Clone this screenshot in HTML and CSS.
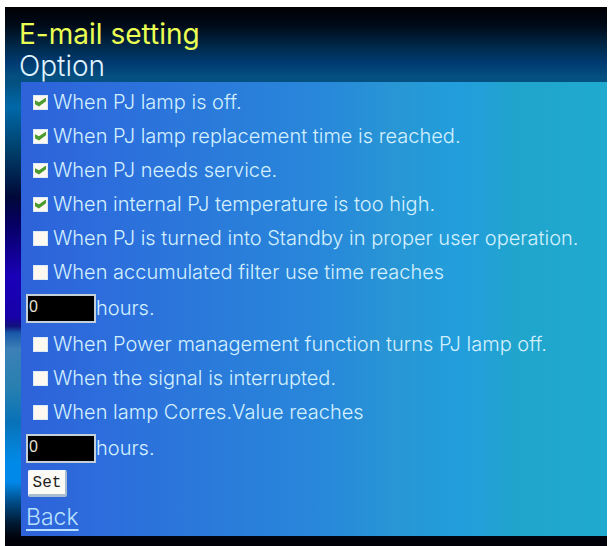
FILE: index.html
```html
<!DOCTYPE html>
<html lang="en">

<head>
    <meta charset="UTF-8">
    <meta name="viewport" content="width=device-width, initial-scale=1.0">
    <title>E-mail setting</title>
    <link rel="stylesheet" href="styles.css">
</head>

<body>
    <div class="page">
        <h1 class="title">E-mail setting</h1>
        <h2 class="subtitle">Option</h2>
        <form class="panel">
            <label class="option"><input type="checkbox" checked>When PJ lamp is off.</label>
            <label class="option"><input type="checkbox" checked>When PJ lamp replacement time is reached.</label>
            <label class="option"><input type="checkbox" checked>When PJ needs service.</label>
            <label class="option"><input type="checkbox" checked>When internal PJ temperature is too high.</label>
            <label class="option"><input type="checkbox">When PJ is turned into Standby in proper user operation.</label>
            <label class="option"><input type="checkbox">When accumulated filter use time reaches</label>
            <div class="hours">
                <input type="text" id="filterHours" value="0">
                <label for="filterHours">hours.</label>
            </div>
            <label class="option"><input type="checkbox">When Power management function turns PJ lamp off.</label>
            <label class="option"><input type="checkbox">When the signal is interrupted.</label>
            <label class="option"><input type="checkbox">When lamp Corres.Value reaches</label>
            <div class="hours">
                <input type="text" id="lampHours" value="0">
                <label for="lampHours">hours.</label>
            </div>
            <button type="button" class="set-btn">Set</button>
            <a class="back" href="#">Back</a>
        </form>
    </div>
</body>

</html>
```

FILE: styles.css
```css
* {
    box-sizing: border-box;
}

body {
    margin: 0;
    padding: 7px 2px 0 5px;
    min-height: 100vh;
    display: flex;
    background-color: #ffffff;
    font-family: Inter, "Liberation Sans", sans-serif;
    font-weight: 300;
    font-size: 20px;
    color: #d4f0ff;
}

.page {
    flex: 1;
    padding: 11px 0 11px 14px;
    /* dark band over the panel, then the coloured strip down the left */
    background:
        linear-gradient(to bottom, #000004 0, #000a18 18px, #002c50 42px, #003b72 56px, #045080 70px, #045080 75px, transparent 75px),
        linear-gradient(to bottom, #045080 75px, #0068a8 100px, #003e68 145px, #000838 190px, #050060 215px, #1a00b8 270px, #1800a8 310px, #12107c 319px, #1858a8 326px, #3c80b8 342px, #2880b0 380px, #0872b8 415px, #008ae8 455px, #0088e8 475px, #004c88 495px, #001830 517px, #000008 532px);
}

.title,
.subtitle {
    margin: 0;
    font-size: 28px;
    font-weight: 400;
    line-height: 32px;
}

.title {
    color: #eaff52;
}

.subtitle {
    font-weight: 300;
    color: #e0f4ff;
}

.panel {
    display: flex;
    flex-direction: column;
    align-items: flex-start;
    margin-left: 2px;
    padding: 3px 0 2px 5px;
    background: linear-gradient(to right, #2e62da 0%, #2c70dc 18%, #2a7cda 35%, #2888da 52%, #2896d4 64%, #229edc 74%, #22a0d8 79%, #20a4cc 84%, #20aad0 100%);
}

.option {
    display: flex;
    align-items: center;
    gap: 5px;
    height: 34px;
    padding-left: 7px;
    white-space: nowrap;
}

.option input {
    appearance: none;
    display: grid;
    place-items: center;
    width: 15px;
    height: 15px;
    margin: 0;
    background-color: #fdf8f0;
    border: 1px solid #dceaf4;
}

.option input:checked::before {
    content: "";
    width: 11px;
    height: 9px;
    background-color: #4c9c30;
    clip-path: polygon(0 30%, 36% 54%, 100% 0, 100% 42%, 36% 100%, 0 74%);
}

.hours {
    display: flex;
    align-items: center;
    height: 38px;
}

.hours input {
    width: 70px;
    height: 29px;
    padding: 0 1px 3px;
    background-color: #000000;
    border: 2px solid #c4d0d8;
    border-radius: 0;
    font-family: "Liberation Sans", sans-serif;
    font-size: 16px;
    color: #e4e0d8;
}

.set-btn {
    width: 39px;
    height: 27px;
    margin: 3px 0 0 2px;
    padding: 0;
    background-color: #fcfaf4;
    border: 1px solid #f4f8fc;
    border-right: 2px solid #a8bcd0;
    border-bottom: 3px solid #a8bcd0;
    border-radius: 2px;
    font-family: "Liberation Mono", monospace;
    font-size: 16px;
    line-height: 20px;
    color: #222222;
}

.back {
    margin-top: 3px;
    font-size: 23px;
    line-height: 34px;
    color: #b8e0ff;
    text-underline-offset: 4px;
}
```
